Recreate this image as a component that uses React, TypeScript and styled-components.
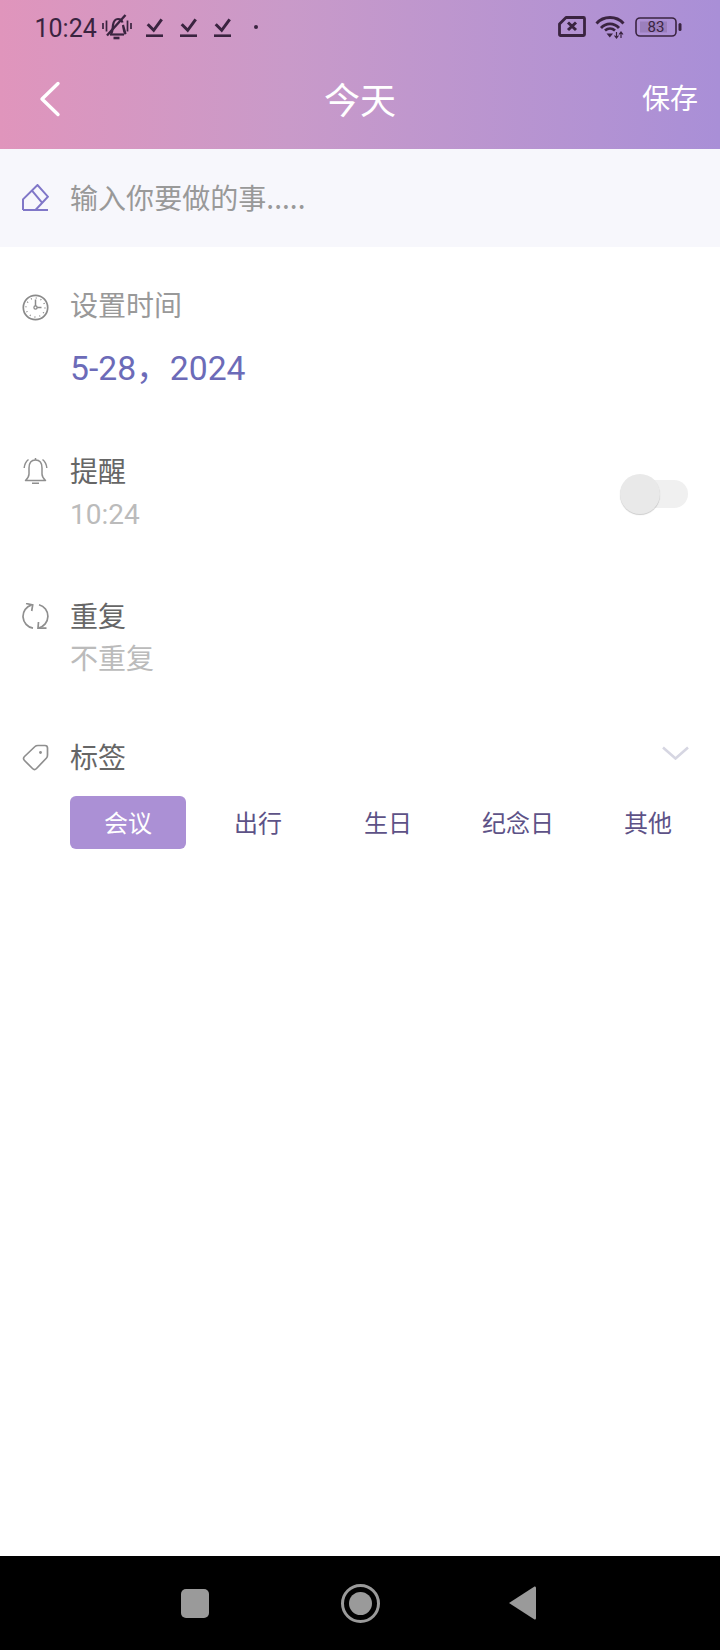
import { FC } from 'react';
import styled, { createGlobalStyle } from 'styled-components';

const GlobalStyle = createGlobalStyle`
  html, body {
    margin: 0;
    padding: 0;
    background: #fff;
  }
  body {
    font-family: Roboto, "Noto Sans CJK SC", sans-serif;
  }
`;

const Page = styled.div`
  width: 720px;
  height: 1650px;
  display: flex;
  flex-direction: column;
  overflow: hidden;
`;

const Header = styled.header`
  height: 149px;
  flex: none;
  background: linear-gradient(90deg, #e095bc 0%, #c99ac9 40%, #a98fd7 100%);
`;

const StatusBar = styled.div`
  height: 54px;
  display: flex;
  align-items: center;
  padding: 0 38px 0 34.5px;
  color: #3a2440;
`;

const Clock = styled.span`
  font-size: 25px;
  line-height: 1;
  padding-top: 2px;
  margin-right: 5px;
`;

const StatusIcon = styled.svg<{ $gap?: number }>`
  display: block;
  flex: none;
  margin-left: ${(p) => p.$gap ?? 0}px;
`;

const Spacer = styled.div`
  flex: 1;
`;

const TitleBar = styled.div`
  height: 95px;
  display: flex;
  align-items: center;
  justify-content: space-between;
  padding: 0 22px 0 39px;
  position: relative;
  color: #fff;
`;

const BackIcon = styled.svg`
  display: block;
  margin-bottom: 5px;
`;

const Title = styled.h1`
  position: absolute;
  left: 0;
  right: 0;
  margin: 0;
  text-align: center;
  font-size: 36px;
  font-weight: 400;
  line-height: 44px;
`;

const Save = styled.span`
  font-size: 28px;
  line-height: 40px;
  margin-bottom: 3px;
`;

const InputBar = styled.div`
  height: 98px;
  box-sizing: border-box;
  flex: none;
  display: flex;
  align-items: center;
  gap: 21px;
  padding: 0 0 2px 22px;
  background: #f7f7fc;
`;

const Placeholder = styled.span`
  font-family: "Noto Sans CJK SC", Roboto, sans-serif;
  font-size: 28px;
  letter-spacing: 0.05px;
  color: #999;
`;

const Content = styled.main`
  flex: 1;
  background: #fff;
`;

const Section = styled.section<{ $top: number }>`
  display: flex;
  gap: 21px;
  padding: ${(p) => p.$top}px 0 0 22px;
`;

const IconSlot = styled.div<{ $height?: number }>`
  width: 27px;
  height: ${(p) => p.$height ?? 36}px;
  flex: none;
  display: flex;
  align-items: center;
`;

const Body = styled.div`
  flex: 1;
  display: flex;
  flex-direction: column;
`;

const MutedLabel = styled.div`
  font-size: 28px;
  line-height: 40px;
  color: #999;
`;

const DateValue = styled.div`
  font-size: 33.7px;
  line-height: 44px;
  margin-top: 20px;
  color: #6c6bb8;
`;

const Label = styled.div`
  font-size: 28px;
  line-height: 40px;
  color: #666;
`;

const SubLabel = styled.div<{ $gap: number }>`
  font-size: 28px;
  line-height: 40px;
  margin-top: ${(p) => p.$gap}px;
  color: #bbb;
`;

const ToggleRow = styled.div`
  display: flex;
  align-items: flex-start;
  justify-content: space-between;
  padding-right: 32px;
`;

const Toggle = styled.div`
  width: 68px;
  height: 40px;
  margin-top: 21px;
  display: flex;
  align-items: center;
  position: relative;
`;

const ToggleTrack = styled.div`
  width: 60px;
  height: 28px;
  margin-left: 8px;
  border-radius: 14px;
  background: #f0f0f0;
`;

const ToggleKnob = styled.div`
  position: absolute;
  left: 0;
  top: 0;
  width: 40px;
  height: 40px;
  border-radius: 50%;
  background: #e9e9e9;
  box-shadow: 0 1px 1px rgba(0, 0, 0, 0.2);
`;

const TagHead = styled.div`
  display: flex;
  align-items: flex-start;
  justify-content: space-between;
  padding-right: 31px;
`;

const Chevron = styled.svg`
  display: block;
  margin-top: 7px;
`;

const TagGrid = styled.div`
  display: grid;
  grid-template-columns: repeat(5, 116px);
  column-gap: 14px;
  margin: 17px 0 0 70px;
`;

const Chip = styled.div<{ $active?: boolean }>`
  height: 53px;
  box-sizing: border-box;
  padding-bottom: 2px;
  display: flex;
  align-items: center;
  justify-content: center;
  border-radius: 6px;
  font-size: 24px;
  color: ${(p) => (p.$active ? '#fff' : '#5d5287')};
  background: ${(p) => (p.$active ? '#ab90d5' : 'transparent')};
`;

const NavBar = styled.nav`
  height: 94px;
  flex: none;
  display: flex;
  align-items: center;
  padding-left: 181px;
  background: #000;
`;

const NavSquare = styled.div`
  width: 28px;
  height: 29px;
  border-radius: 5px;
  background: #9a9a9a;
`;

const NavCircle = styled.div`
  width: 39px;
  height: 39px;
  margin-left: 132px;
  box-sizing: border-box;
  border: 3px solid #9a9a9a;
  border-radius: 50%;
  display: flex;
  align-items: center;
  justify-content: center;
`;

const NavDot = styled.div`
  width: 23px;
  height: 23px;
  border-radius: 50%;
  background: #9a9a9a;
`;

const NavBack = styled.svg`
  display: block;
  margin-left: 129px;
`;

const CheckIcon: FC<{ gap: number }> = ({ gap }) => (
  <StatusIcon $gap={gap} width="17" height="19" viewBox="0 0 17 19" fill="none" stroke="#3a2440">
    <path d="M1.7 6.3l6 6 8-11" strokeWidth="3" />
    <path d="M0 17.7h17" strokeWidth="2.6" />
  </StatusIcon>
);

const App: FC = () => {
  return (
    <Page>
      <GlobalStyle />
      <Header>
        <StatusBar>
          <Clock>10:24</Clock>
          <StatusIcon width="30" height="26" viewBox="0 0 30 26" fill="none" stroke="#3a2440">
            <path d="M1 9v6M4.500 6.500v11M25.500 6.500v11M29 9v6" strokeWidth="1.7" />
            <path d="M9 20c2-2.500 1.500-6 2-9 .6-3.500 2-6 5-6 2.500 0 4 1.500 4.500 3.500M21 11c.5 3 .5 6.500 2.500 9z" strokeWidth="2.200" />
            <path d="M8 20.500h14" strokeWidth="2.200" />
            <path d="M23.500 1L5 21.500" strokeWidth="2.400" />
            <path d="M11.500 24h6" strokeWidth="2.600" />
          </StatusIcon>
          <CheckIcon gap={14} />
          <CheckIcon gap={17} />
          <CheckIcon gap={17} />
          <StatusIcon $gap={23} width="4" height="4" viewBox="0 0 4 4" fill="#3a2440">
            <circle cx="2" cy="2" r="2" />
          </StatusIcon>
          <Spacer />
          <StatusIcon width="28" height="22" viewBox="0 0 28 22" fill="none" stroke="#3a2440">
            <path d="M8 1.500h17.500a1 1 0 0 1 1 1v16a1 1 0 0 1-1 1H2.500a1 1 0 0 1-1-1V8z" strokeWidth="2.800" strokeLinejoin="round" />
            <path d="M10 6.500l8 7.500M18 6.500l-8 7.500" strokeWidth="3" />
          </StatusIcon>
          <StatusIcon $gap={9} width="30" height="24" viewBox="0 0 30 24" fill="none" stroke="#3a2440">
            <path d="M1.500 8.500C8.500 .5 21.500 .5 28.500 8.500M6 13C11 7.500 19 7.500 24 13" strokeWidth="2.800" />
            <path d="M10 15.500c3-2.500 7-2.500 10 0" strokeWidth="2.800" />
            <path d="M11.500 18.500h6.500l-3.200 4z" fill="#3a2440" stroke="none" />
            <path d="M21.500 17v5.500M19.500 20.500l2 2.500 2-2.500M26 23v-5.500M24 19.500l2-2.500 2 2.500" strokeWidth="1.200" />
          </StatusIcon>
          <StatusIcon $gap={10} width="47" height="20" viewBox="0 0 47 20" fill="none">
            <rect x="1" y="1" width="40" height="18" rx="4" stroke="#3a2440" strokeWidth="1.6" />
            <rect x="5" y="4.500" width="27" height="11" fill="#3a2440" fillOpacity="0.16" />
            <text x="21" y="15" textAnchor="middle" fontSize="15" fontFamily="Roboto, sans-serif" fill="#3a2440">83</text>
            <rect x="43.500" y="6" width="3" height="8" rx="1.500" fill="#3a2440" />
          </StatusIcon>
        </StatusBar>
        <TitleBar>
          <BackIcon width="22" height="38" viewBox="0 0 22 38" fill="none" stroke="#fff">
            <path d="M19 3.500L3 19l16 15.500" strokeWidth="3.400" strokeLinecap="round" strokeLinejoin="round" />
          </BackIcon>
          <Title>今天</Title>
          <Save>保存</Save>
        </TitleBar>
      </Header>

      <InputBar>
        <svg width="27" height="27" viewBox="0 0 27 27" fill="none" stroke="#8077c8" strokeWidth="2">
          <path d="M1 26V15.300L15.500 1l10.400 11.700L13.500 26M1 26h25M10 6.700l10 12" />
        </svg>
        <Placeholder>输入你要做的事.....</Placeholder>
      </InputBar>

      <Content>
        <Section $top={40}>
          <IconSlot $height={41}>
            <svg width="27" height="27" viewBox="0 0 27 27" fill="none" stroke="#8a8a8a">
              <circle cx="13.500" cy="13.500" r="12.200" strokeWidth="1.700" />
              <circle cx="13.500" cy="13.500" r="9.500" strokeWidth="1.400" strokeDasharray="1 3.970" />
              <path d="M13.500 5.500v8h6" strokeWidth="1.500" />
              <circle cx="13.500" cy="13.500" r="1.600" strokeWidth="1.300" fill="#fff" />
            </svg>
          </IconSlot>
          <Body>
            <MutedLabel>设置时间</MutedLabel>
            <DateValue>5-28，2024</DateValue>
          </Body>
        </Section>

        <Section $top={62}>
          <IconSlot>
            <svg width="27" height="28" viewBox="0 0 27 28" fill="none" stroke="#8f8f8f" strokeWidth="1.500">
              <path d="M13.500 3C9 3 7 6.500 7 11v6c0 2.500-1.500 4.500-3.500 6.500h20c-2-2-3.500-4-3.500-6.500v-6c0-4.500-2-8-6.500-8z" strokeLinejoin="round" />
              <path d="M10 26.300h7M13.500 1v2M2.200 11C2.500 7 4 4.500 6.500 2.500M24.800 11C24.500 7 23 4.500 20.500 2.500" />
            </svg>
          </IconSlot>
          <Body>
            <ToggleRow>
              <div>
                <Label>提醒</Label>
                <SubLabel $gap={2}>10:24</SubLabel>
              </div>
              <Toggle>
                <ToggleTrack />
                <ToggleKnob />
              </Toggle>
            </ToggleRow>
          </Body>
        </Section>

        <Section $top={63}>
          <IconSlot>
            <svg width="27" height="27" viewBox="0 0 27 27" fill="none" stroke="#8f8f8f" strokeWidth="1.700">
              <path d="M9.500 1.900A12 12 0 0 0 11 25.200M17 1.700A12 12 0 0 1 16.500 25" />
              <path d="M4 .5l6.700 1.500-1 6M16.500 19l-.5 6.200h8.500" />
            </svg>
          </IconSlot>
          <Body>
            <Label>重复</Label>
            <SubLabel $gap={2}>不重复</SubLabel>
          </Body>
        </Section>

        <Section $top={59}>
          <IconSlot>
            <svg width="27" height="27" viewBox="0 0 27 27" fill="none" stroke="#8f8f8f" strokeWidth="1.700">
              <path d="M13 2.500q1-1 3-1h7a2.500 2.500 0 0 1 2.500 2.500v7q0 2-1 3L14.500 24.500q-2 2-4 0l-8-8q-2-2 0-4z" strokeLinejoin="round" />
              <circle cx="18.500" cy="8.500" r="1.400" fill="#8f8f8f" stroke="none" />
            </svg>
          </IconSlot>
          <Body>
            <TagHead>
              <Label>标签</Label>
              <Chevron width="27" height="14" viewBox="0 0 27 14" fill="none" stroke="#d6d6e2">
                <path d="M1 1.500l12.500 11L26 1.500" strokeWidth="2.600" />
              </Chevron>
            </TagHead>
          </Body>
        </Section>
        <TagGrid>
          <Chip $active>会议</Chip>
          <Chip>出行</Chip>
          <Chip>生日</Chip>
          <Chip>纪念日</Chip>
          <Chip>其他</Chip>
        </TagGrid>
      </Content>

      <NavBar>
        <NavSquare />
        <NavCircle>
          <NavDot />
        </NavCircle>
        <NavBack width="27" height="34" viewBox="0 0 27 34" fill="#9a9a9a">
          <path d="M25.500 .5Q27 0 27 2v30q0 2-1.500 1.500L0 17z" />
        </NavBack>
      </NavBar>
    </Page>
  );
};

export default App;
